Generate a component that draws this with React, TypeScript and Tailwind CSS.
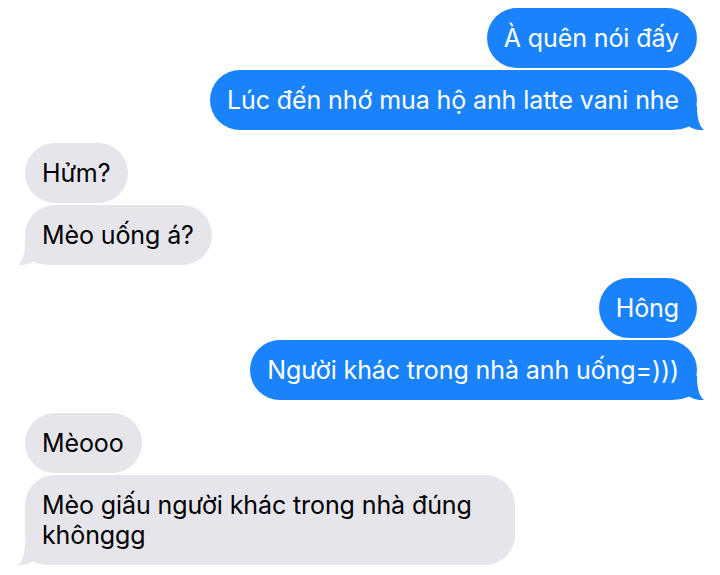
const messages = [
  { from: "me", text: "À quên nói đấy", first: true },
  { from: "me", text: "Lúc đến nhớ mua hộ anh latte vani nhe", tail: true },
  { from: "them", text: "Hửm?", first: true },
  { from: "them", text: "Mèo uống á?", tail: true },
  { from: "me", text: "Hông", first: true },
  { from: "me", text: "Người khác trong nhà anh uống=)))", tail: true },
  { from: "them", text: "Mèooo", first: true },
  { from: "them", text: "Mèo giấu người khác trong nhà đúng khônggg", tail: true },
];

const Tail = ({ side, color }: { side: "left" | "right"; color: string }) => (
  <svg
    width="37"
    height="24"
    viewBox="0 0 37 24"
    className={side === "right" ? "absolute bottom-0 right-[-7px]" : "absolute bottom-0 left-[-7px] -scale-x-100"}
  >
    <path d="M0 24 C10 24 17 23 22 20.5 C26 23 31 24.5 37 24 C32 20 30 12 30 0 L0 0 Z" fill={color} />
  </svg>
);

export default function App() {
  return (
    <div className="w-[720px] h-[575px] bg-white overflow-hidden pt-[8px] px-[23px] pl-[25px] font-['Inter','Noto_Sans',sans-serif]">
      {messages.map((m, i) => {
        const mine = m.from === "me";
        return (
          <div
            key={i}
            className={`flex ${mine ? "justify-end" : "justify-start"} ${m.first && i > 0 ? "mt-[13px]" : i > 0 ? "mt-[2px]" : ""}`}
          >
            <div
              className={`relative max-w-[490px] rounded-[30px] pl-[17px] pr-[18px] py-[15px] text-[25px] leading-[30px] tracking-[-0.1px] ${
                mine ? "bg-[#1a83fc] text-white" : "bg-[#e6e5eb] text-black"
              }`}
            >
              <span className="relative z-10">{m.text}</span>
              {m.tail && <Tail side={mine ? "right" : "left"} color={mine ? "#1a83fc" : "#e6e5eb"} />}
            </div>
          </div>
        );
      })}
    </div>
  );
}
